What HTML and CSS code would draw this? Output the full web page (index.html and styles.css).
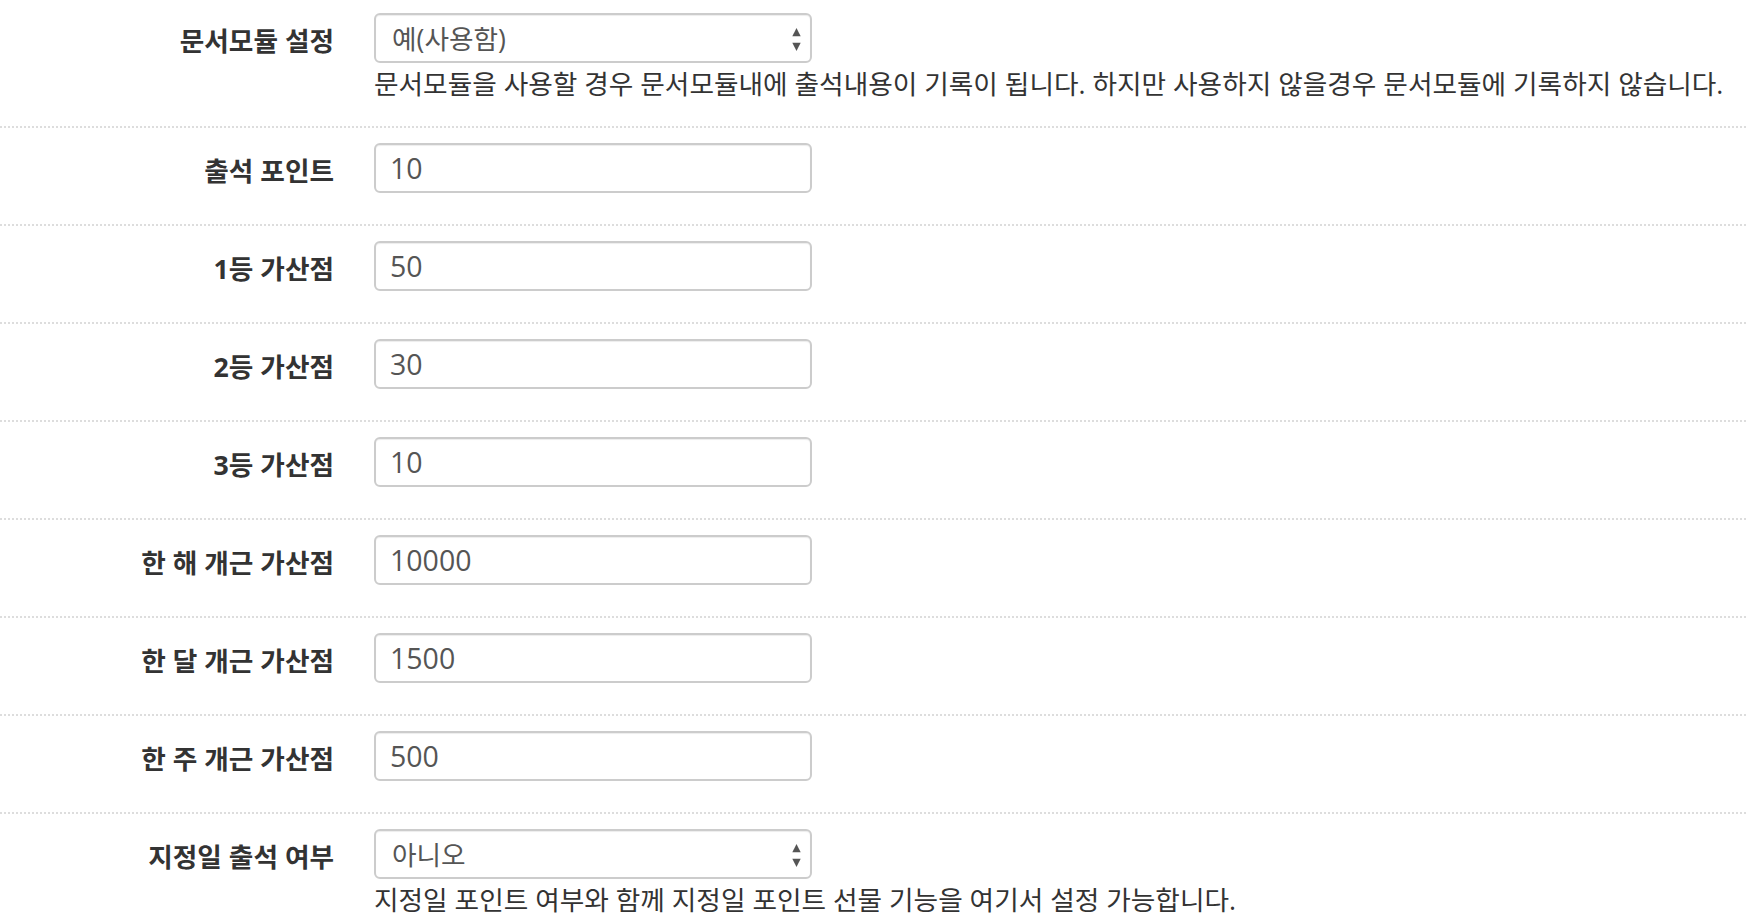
FILE: index.html
```html
<!DOCTYPE html>
<html lang="ko">
<head>
<meta charset="UTF-8">
<title>출석부 설정</title>
<link rel="stylesheet" href="styles.css">
</head>
<body>
<div class="config">

  <div class="row row-first">
    <label class="row-label">문서모듈 설정</label>
    <div class="row-field">
      <div class="select-wrap">
        <select class="field field-select"><option>예(사용함)</option><option>아니오</option></select>
        <svg class="select-arrows" viewBox="0 0 8 22"><polygon points="4,0 8,8 0,8"/><polygon points="0,14 8,14 4,22"/></svg>
      </div>
      <p class="help">문서모듈을 사용할 경우 문서모듈내에 출석내용이 기록이 됩니다. 하지만 사용하지 않을경우 문서모듈에 기록하지 않습니다.</p>
    </div>
  </div>

  <div class="row">
    <label class="row-label">출석 포인트</label>
    <div class="row-field"><input class="field" type="text" value="10"></div>
  </div>

  <div class="row">
    <label class="row-label">1등 가산점</label>
    <div class="row-field"><input class="field" type="text" value="50"></div>
  </div>

  <div class="row">
    <label class="row-label">2등 가산점</label>
    <div class="row-field"><input class="field" type="text" value="30"></div>
  </div>

  <div class="row">
    <label class="row-label">3등 가산점</label>
    <div class="row-field"><input class="field" type="text" value="10"></div>
  </div>

  <div class="row">
    <label class="row-label">한 해 개근 가산점</label>
    <div class="row-field"><input class="field" type="text" value="10000"></div>
  </div>

  <div class="row">
    <label class="row-label">한 달 개근 가산점</label>
    <div class="row-field"><input class="field" type="text" value="1500"></div>
  </div>

  <div class="row">
    <label class="row-label">한 주 개근 가산점</label>
    <div class="row-field"><input class="field" type="text" value="500"></div>
  </div>

  <div class="row row-last">
    <label class="row-label">지정일 출석 여부</label>
    <div class="row-field">
      <div class="select-wrap">
        <select class="field field-select"><option>아니오</option><option>예</option></select>
        <svg class="select-arrows" viewBox="0 0 8 22"><polygon points="4,0 8,8 0,8"/><polygon points="0,14 8,14 4,22"/></svg>
      </div>
      <p class="help">지정일 포인트 여부와 함께 지정일 포인트 선물 기능을 여기서 설정 가능합니다.</p>
    </div>
  </div>

</div>
</body>
</html>
```

FILE: styles.css
```css
body {
  margin: 0;
  background: #fff;
  color: #333;
  font-family: "Open Sans", "Noto Sans CJK KR", sans-serif;
}

.row {
  display: flex;
  align-items: flex-start;
  padding: 15px 0 31px;
  border-bottom: 2px dotted #ddd;
}
.row-first {
  padding-top: 13px;
}
.row-last {
  border-bottom: none;
}

.row-label {
  flex: none;
  width: 334px;
  padding-top: 5px;
  text-align: right;
  font-size: 26.7px;
  font-weight: 700;
  line-height: 45px;
  color: #333;
}
.row-field {
  margin-left: 40px;
}

.field {
  display: block;
  box-sizing: border-box;
  width: 438px;
  height: 50px;
  margin: 0;
  padding: 0 14px;
  border: 2px solid #ccc;
  border-radius: 6px;
  background: #fff;
  box-shadow: inset 0 1px 1px rgba(0, 0, 0, 0.075);
  font-family: inherit;
  font-size: 28.5px;
  color: #555;
  outline: none;
}

/* native-looking select with the up/down arrows */
.select-wrap {
  position: relative;
  width: 438px;
}
.field-select {
  -webkit-appearance: none;
  appearance: none;
  font-size: 26.7px;
  padding-left: 16px;
}
.select-arrows {
  position: absolute;
  top: 15px;
  right: 11px;
  width: 9px;
  height: 23px;
  fill: #555;
  pointer-events: none;
}

.help {
  margin: 6px 0 -4px;
  font-size: 26.7px;
  line-height: 30px;
  color: #333;
  white-space: nowrap;
}
```
